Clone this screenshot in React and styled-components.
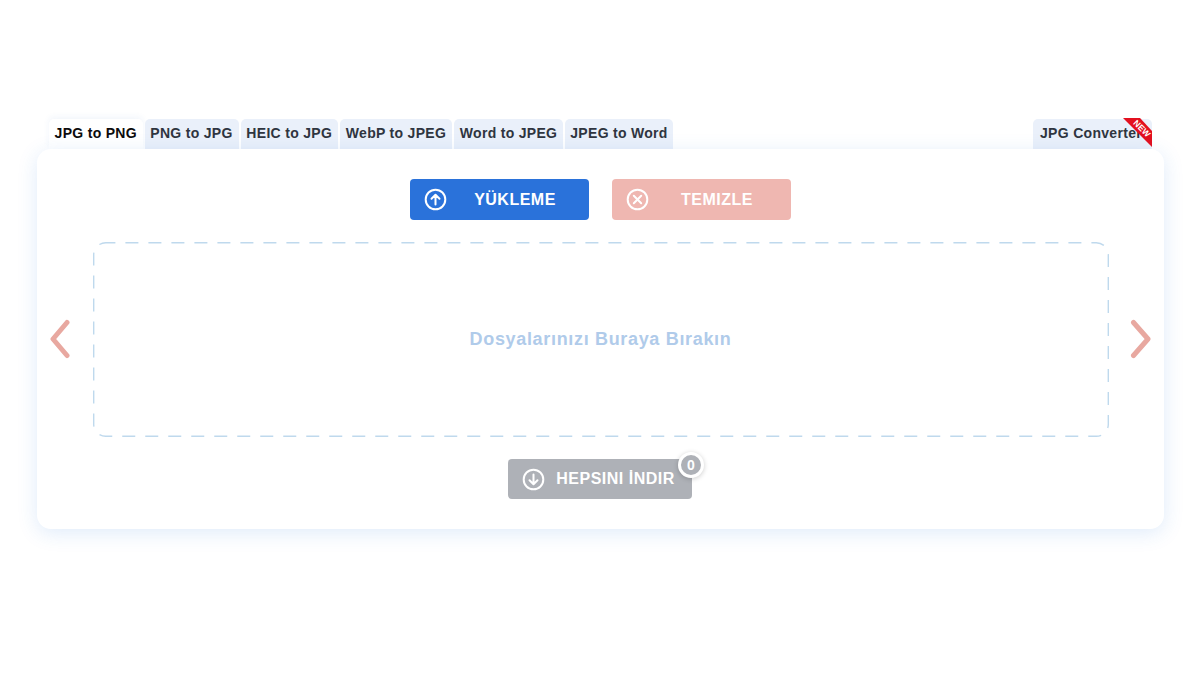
import React from 'react';
import styled, { createGlobalStyle } from 'styled-components';

const GlobalStyle = createGlobalStyle`
  html, body {
    margin: 0;
    padding: 0;
    background: #fff;
    font-family: 'Liberation Sans', Arial, sans-serif;
  }
`;

const Page = styled.div`
  width: 1200px;
  height: 675px;
  padding: 119px 36px 0 37px;
  box-sizing: border-box;
  overflow: hidden;
`;

const TabBar = styled.div`
  display: flex;
  gap: 2px;
  height: 30px;
  padding: 0 12px;
`;

const Tab = styled.div`
  position: relative;
  width: ${(p) => p.$width}px;
  margin-left: ${(p) => (p.$pushRight ? 'auto' : '0')};
  padding: 0 ${(p) => (p.$pushRight ? '3px' : '0')} 2px 0;
  display: flex;
  align-items: center;
  justify-content: center;
  box-sizing: border-box;
  border-radius: 5px 5px 0 0;
  background: ${(p) => (p.$active ? '#fff' : '#eaf0fa')};
  box-shadow: ${(p) => (p.$active ? '0 -2px 6px rgba(60, 110, 200, 0.07)' : 'none')};
  color: ${(p) => (p.$active ? '#0c0c0c' : '#2f3540')};
  font-size: 14px;
  font-weight: 700;
  letter-spacing: 0.3px;
  white-space: nowrap;
`;

const Ribbon = styled.svg`
  position: absolute;
  top: -1px;
  right: 0;
  width: 30px;
  height: 30px;
`;

const Card = styled.div`
  height: 380px;
  box-sizing: border-box;
  padding-top: 30px;
  display: flex;
  flex-direction: column;
  align-items: center;
  background: #fff;
  border-radius: 14px;
  box-shadow: 0 4px 20px rgba(40, 120, 220, 0.15);
  position: relative;
`;

const ActionRow = styled.div`
  display: flex;
  gap: 23px;
`;

const ActionButton = styled.div`
  position: relative;
  width: ${(p) => p.$width}px;
  height: ${(p) => p.$height || 41}px;
  padding-left: 14px;
  box-sizing: border-box;
  display: flex;
  align-items: center;
  border-radius: 4px;
  background: ${(p) => p.$bg};
  color: #fff;
  font-size: 16px;
  font-weight: 700;
`;

const ButtonLabel = styled.span`
  flex: 1;
  text-align: center;
  padding-right: ${(p) => p.$shift}px;
  letter-spacing: 0.5px;
`;

const RoundIcon = styled.svg`
  width: 23px;
  height: 23px;
  flex: none;
`;

const DropRow = styled.div`
  width: 100%;
  margin-top: 22px;
  padding: 0 12px;
  box-sizing: border-box;
  display: flex;
  align-items: center;
  justify-content: space-between;
`;

const Chevron = styled.svg`
  width: 24px;
  height: 42px;
  flex: none;
`;

const DropZone = styled.div`
  position: relative;
  width: 1016px;
  height: 195px;
  display: flex;
  align-items: center;
  justify-content: center;
  color: #b0cbea;
  font-size: 18px;
  font-weight: 700;
  letter-spacing: 0.67px;
`;

const DashedFrame = styled.svg`
  position: absolute;
  inset: 0;
  width: 100%;
  height: 100%;
`;

const DownloadButton = styled(ActionButton)`
  margin-top: 22px;
  margin-right: 1px;
`;

const CountBadge = styled.div`
  position: absolute;
  top: -7px;
  right: -12px;
  width: 20px;
  height: 20px;
  border: 3px solid #fff;
  border-radius: 50%;
  background: #aeb1b7;
  box-shadow: 0 1px 5px rgba(0, 0, 0, 0.2);
  display: flex;
  align-items: center;
  justify-content: center;
  font-size: 14px;
  font-weight: 700;
`;

const tabs = [
  ['JPG to PNG', 93.5],
  ['PNG to JPG', 94],
  ['HEIC to JPG', 97.5],
  ['WebP to JPEG', 112],
  ['Word to JPEG', 109],
  ['JPEG to Word', 108],
];

const Circle = ({ children }) => (
  <RoundIcon viewBox="0 0 23 23" fill="none" stroke="#fff" strokeWidth="2" strokeLinecap="round" strokeLinejoin="round">
    <circle cx="11.5" cy="11.5" r="9.8" />
    {children}
  </RoundIcon>
);

const App = () => (
  <>
    <GlobalStyle />
    <Page>
      <TabBar>
        {tabs.map(([label, width], i) => (
          <Tab key={label} $width={width} $active={i === 0}>
            {label}
          </Tab>
        ))}
        <Tab $width={119} $pushRight>
          JPG Converter
          <Ribbon viewBox="0 0 30 30">
            <polygon points="1,0 18,0 30,13 30,29" fill="#e3101f" />
            <text
              x="20"
              y="13.500"
              fill="#fff"
              fontSize="8.500"
              fontWeight="700"
              textAnchor="middle"
              transform="rotate(45 20 10.500)"
              letterSpacing="0"
            >
              NEW
            </text>
          </Ribbon>
        </Tab>
      </TabBar>
      <Card>
        <ActionRow>
          <ActionButton $width={179} $bg="#2a72da">
            <Circle>
              <path d="M11.5 16.5V7M7.5 10.8l4-4 4 4" />
            </Circle>
            <ButtonLabel $shift={6}>YÜKLEME</ButtonLabel>
          </ActionButton>
          <ActionButton $width={179} $bg="#efb7b1">
            <Circle>
              <path d="M7.8 7.8l7.4 7.4M15.2 7.8l-7.4 7.4" />
            </Circle>
            <ButtonLabel $shift={6}>TEMIZLE</ButtonLabel>
          </ActionButton>
        </ActionRow>
        <DropRow>
          <Chevron viewBox="0 0 24 42" fill="none" stroke="#e8a8a0" strokeWidth="5" strokeLinecap="round" strokeLinejoin="round">
            <path d="M18 3.500L4 20L18 36.500" />
          </Chevron>
          <DropZone>
            <DashedFrame>
              <rect
                x="0.7"
                y="0.7"
                width="1014.6"
                height="193.6"
                rx="12"
                fill="none"
                stroke="#bfd9ed"
                strokeWidth="1.4"
                strokeDasharray="13 10"
                strokeDashoffset="3.300"
              />
            </DashedFrame>
            Dosyalarınızı Buraya Bırakın
          </DropZone>
          <Chevron viewBox="0 0 24 42" fill="none" stroke="#e8a8a0" strokeWidth="5" strokeLinecap="round" strokeLinejoin="round">
            <path d="M5.500 3.500L20 20L5.500 36.500" />
          </Chevron>
        </DropRow>
        <DownloadButton $width={184} $height={40} $bg="#aeb1b7">
          <Circle>
            <path d="M11.5 6.500V16M7.5 12.200l4 4 4-4" />
          </Circle>
          <ButtonLabel $shift={6}>HEPSINI İNDIR</ButtonLabel>
          <CountBadge>0</CountBadge>
        </DownloadButton>
      </Card>
    </Page>
  </>
);

export default App;
